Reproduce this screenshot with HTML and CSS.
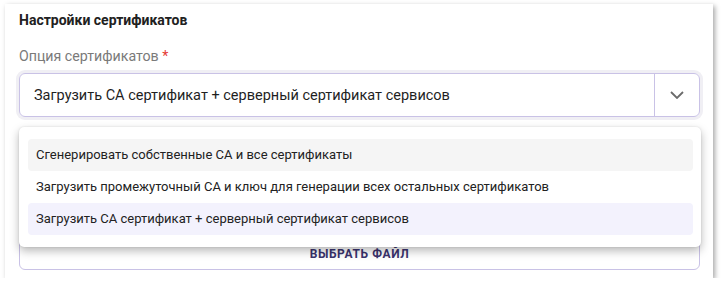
FILE: index.html
```html
<!DOCTYPE html>
<html lang="ru">
<head>
    <meta charset="UTF-8">
    <title>Настройки сертификатов</title>
    <link rel="stylesheet" href="styles.css">
</head>
<body>

    <div class="card">
        <div class="card-title">Настройки сертификатов</div>

        <div class="field-label">Опция сертификатов <span class="required">*</span></div>

        <div class="select-wrap">
            <div class="select">
                <div class="select-value">Загрузить CA сертификат + серверный сертификат сервисов</div>
                <div class="select-arrow">
                    <svg width="14" height="8" viewBox="0 0 14 8">
                        <path d="M1 1 L7 7 L13 1" fill="none" stroke="#6b6b6b" stroke-width="1.8"/>
                    </svg>
                </div>
            </div>

            <!-- выпадающий список -->
            <div class="menu">
                <div class="menu-item hover">Сгенерировать собственные CA и все сертификаты</div>
                <div class="menu-item">Загрузить промежуточный CA и ключ для генерации всех остальных сертификатов</div>
                <div class="menu-item selected">Загрузить CA сертификат + серверный сертификат сервисов</div>
            </div>
        </div>

        <div class="file-button">Выбрать файл</div>
    </div>

</body>
</html>
```

FILE: styles.css
```css
body {
    margin: 0;
    background-color: #ffffff;
    font-family: Roboto, "Noto Sans", sans-serif;
    color: #212121;
    overflow: hidden;
}

.card {
    margin: 4px 0 0 5px;
    width: 708px;
    height: 274px;
    box-sizing: border-box;
    padding: 8px 13px 0 14px;
    background-color: #fff;
    box-shadow: 2px 2px 5px rgba(0, 0, 0, 0.35);
}

.card-title {
    font-size: 14px;
    font-weight: 700;
    line-height: 16px;
    color: #212121;
}

.field-label {
    margin-top: 20px;
    font-size: 14.2px;
    line-height: 16px;
    color: #7a7a7a;
}

.required {
    color: #e53935;
}

.select-wrap {
    position: relative;
    margin-top: 9px;
}

.select {
    display: flex;
    height: 44px;
    box-sizing: border-box;
    border: 1px solid #c9c2e6;
    border-radius: 6px;
    box-shadow: 0 0 0 3px #f0eff4;
}

.select-value {
    flex: 1;
    display: flex;
    align-items: center;
    padding-left: 14px;
    font-size: 14.5px;
    color: #1f1f1f;
}

.select-arrow {
    width: 44px;
    border-left: 1px solid #c9c2e6;
    display: flex;
    align-items: center;
    justify-content: center;
}

.menu {
    position: absolute;
    top: 54px;
    left: 0;
    width: 682px;
    box-sizing: border-box;
    padding: 12px 8px 12px 9px;
    background-color: #fff;
    border-radius: 5px;
    box-shadow: 0 4px 10px rgba(0, 0, 0, 0.28), 0 0 2px rgba(0, 0, 0, 0.12);
    z-index: 2;
}

.menu-item {
    height: 32px;
    line-height: 32px;
    padding-left: 8px;
    border-radius: 4px;
    font-size: 13px;
    color: #222;
}

.menu-item.hover {
    background-color: #f5f5f5;
}

.menu-item.selected {
    background-color: #f3f2fd;
}

.file-button {
    margin-top: 121px;
    height: 32px;
    box-sizing: border-box;
    border: 1px solid #c9c2e6;
    border-radius: 6px;
    display: flex;
    align-items: center;
    justify-content: center;
    font-size: 12px;
    font-weight: 700;
    letter-spacing: 0.6px;
    text-transform: uppercase;
    color: #3a336e;
}
```
